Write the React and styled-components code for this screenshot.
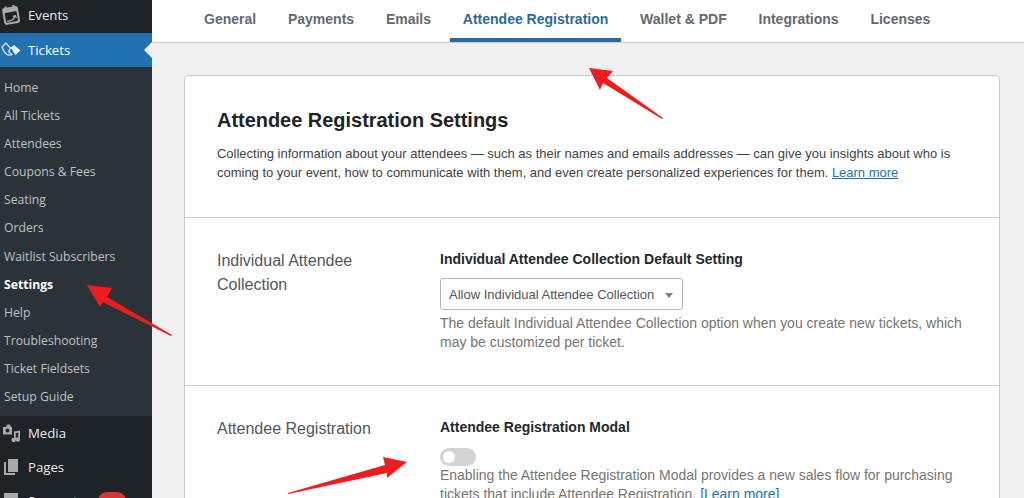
import React from 'react';
import styled, { createGlobalStyle } from 'styled-components';

const GlobalStyle = createGlobalStyle`
  html, body {
    margin: 0;
    padding: 0;
    height: 498px;
    overflow: hidden;
    background: #f0f0f1;
  }
  * { box-sizing: border-box; }
`;

const Page = styled.div`
  position: relative;
  display: flex;
  width: 1024px;
  height: 498px;
  overflow: hidden;
  font-family: "Liberation Sans", Arial, sans-serif;
`;

// Sidebar
const Sidebar = styled.nav`
  flex: 0 0 152px;
  display: flex;
  flex-direction: column;
  height: 640px;
  background: #1d2327;
  font-family: "Open Sans", "Noto Sans", sans-serif;
`;

const MenuItem = styled.div`
  position: relative;
  display: flex;
  align-items: center;
  flex: 0 0 34px;
  gap: 7px;
  padding-left: 1px;
  font-size: 13.2px;
  color: ${(p) => (p.$active ? '#fff' : '#e8eaeb')};
  background: ${(p) => (p.$active ? '#2271b1' : 'transparent')};
`;

const FirstItem = styled(MenuItem)`
  flex-basis: 33px;
  padding-bottom: 3px;
`;

const MenuIcon = styled.svg`
  flex: 0 0 20px;
  width: 20px;
  height: 20px;
`;

const Notch = styled.span`
  position: absolute;
  right: 0;
  top: 50%;
  margin-top: -8px;
  border: 8px solid transparent;
  border-right-color: #f0f0f1;
  border-left-width: 0;
`;

const Badge = styled.span`
  width: 28px;
  height: 18px;
  margin-left: 14px;
  border-radius: 9px;
  background: #d63638;
`;

const SubMenu = styled.div`
  flex: 0 0 349px;
  display: flex;
  flex-direction: column;
  padding: 7px 0 0 4px;
  background: #2c3338;
`;

const SubItem = styled.div`
  height: 28.1px;
  line-height: 28px;
  font-size: 12.2px;
  white-space: nowrap;
  color: ${(p) => (p.$current ? '#fff' : '#bcc1c5')};
  font-weight: ${(p) => (p.$current ? 700 : 400)};
`;

// Main area
const Main = styled.main`
  flex: 1;
  display: flex;
  flex-direction: column;
  min-width: 0;
`;

const TabBar = styled.div`
  flex: 0 0 43px;
  display: flex;
  gap: 6.8px;
  padding-left: 39.5px;
  background: #fff;
  border-bottom: 1px solid #c9cacc;
`;

const Tab = styled.div`
  height: 42px;
  padding: 0 12.5px;
  line-height: 38px;
  font-size: 14px;
  font-weight: 700;
  white-space: nowrap;
  color: ${(p) => (p.$active ? '#2c6a9c' : '#646970')};
  border-bottom: 4px solid ${(p) => (p.$active ? '#2c6a9c' : 'transparent')};
`;

const Card = styled.section`
  width: 816px;
  margin: 32px 0 0 32px;
  background: #fff;
  border: 1px solid #c9cacc;
  border-radius: 4px;
`;

const Intro = styled.div`
  height: 142px;
  padding: 31px 32px 0;
  border-bottom: 1px solid #c9cacc;
`;

const Title = styled.h1`
  margin: 0 0 11px;
  font-size: 19.95px;
  line-height: 26px;
  font-weight: 700;
  color: #1d2327;
`;

const IntroText = styled.p`
  margin: 0;
  font-size: 12.97px;
  line-height: 19px;
  color: #3c434a;
`;

const Link = styled.span`
  color: #2271b1;
  text-decoration: underline;
`;

const Row = styled.div`
  display: flex;
  height: ${(p) => p.$height}px;
  padding: 31px 32px 0;
  border-bottom: ${(p) => (p.$last ? 'none' : '1px solid #c9cacc')};
`;

const RowLabel = styled.div`
  flex: 0 0 223px;
  padding-right: 50px;
  font-size: 16px;
  line-height: 24px;
  color: #50575e;
`;

const RowBody = styled.div`
  flex: 1;
  min-width: 0;
`;

const FieldTitle = styled.div`
  font-size: 14px;
  line-height: 20px;
  font-weight: 700;
  color: #23282d;
`;

const Select = styled.div`
  display: flex;
  align-items: center;
  justify-content: space-between;
  width: 243px;
  height: 32px;
  margin: 9px 0 4px;
  padding: 0 9px 0 8px;
  border: 1px solid #b4b6b8;
  border-radius: 3px;
  font-size: 13px;
  color: #50575e;
`;

const Caret = styled.span`
  margin-top: 2px;
  border: 4px solid transparent;
  border-top: 5px solid #7b8085;
  border-bottom-width: 0;
`;

const Help = styled.p`
  margin: 0;
  width: 530px;
  font-size: 13.97px;
  line-height: 19px;
  color: #757575;
`;

const Toggle = styled.div`
  display: flex;
  align-items: center;
  width: 36px;
  height: 18px;
  margin: 11px 0 0;
  padding-left: 3px;
  border-radius: 9px;
  background: #d4d4d4;
`;

const Knob = styled.span`
  width: 12px;
  height: 12px;
  border-radius: 50%;
  background: #fff;
`;

const Arrow = styled.svg`
  position: absolute;
  left: 0;
  top: 0;
  pointer-events: none;
`;

const subItems = [
  'Home', 'All Tickets', 'Attendees', 'Coupons & Fees', 'Seating', 'Orders',
  'Waitlist Subscribers', 'Settings', 'Help', 'Troubleshooting', 'Ticket Fieldsets', 'Setup Guide',
];

const tabs = ['General', 'Payments', 'Emails', 'Attendee Registration', 'Wallet & PDF', 'Integrations', 'Licenses'];

const EventsIcon = () => (
  <MenuIcon viewBox="0 0 20 20">
    <g transform="rotate(-10 10 10)">
      <rect x="2" y="2" width="16" height="17" rx="2.500" fill="#a7aaad" />
      <rect x="4" y="7" width="12" height="10" rx="1" fill="#1d2327" />
      <path d="M6 0.500v4M14 0.500v4" stroke="#a7aaad" strokeWidth="2" />
      <path d="M5 15.500c3 .5 7-.5 9-4l-2.500.2M14 11.500l.8 2.400" stroke="#a7aaad" strokeWidth="1.300" fill="none" />
    </g>
  </MenuIcon>
);

const TicketsIcon = () => (
  <MenuIcon viewBox="0 0 20 20">
    <path d="M1 7l4-4 4.500 5-2 3.500 3.500 3c-4 2-7 0-10-7.500z" fill="none" stroke="#e4f1fb" strokeWidth="1.200" />
    <path d="M9.500 7.500l3.500-2.500 6.500 5.500-5 4.500z" fill="#e4f1fb" />
  </MenuIcon>
);

const MediaIcon = () => (
  <MenuIcon viewBox="0 0 20 20">
    <path d="M2 4h3l1.200-2.500h2.600L10 4h1v7.500H2z" fill="#a7aaad" />
    <circle cx="6.500" cy="7.500" r="1.900" fill="#1d2327" />
    <path d="M13 8.500l6-1v9a2.200 2.200 0 1 1-1.800-2.100v-4.700l-2.400.4v6.900a2.200 2.200 0 1 1-1.800-2.100z" fill="#a7aaad" />
  </MenuIcon>
);

const PagesIcon = () => (
  <MenuIcon viewBox="0 0 20 20">
    <path d="M7 2h10v13H7z" fill="#a7aaad" />
    <path d="M3 5h2v11h9v2H3z" fill="#a7aaad" />
  </MenuIcon>
);

const SupportIcon = () => (
  <MenuIcon viewBox="0 0 20 20">
    <path d="M3 2h14v13H3z" fill="#a7aaad" />
  </MenuIcon>
);

// Red annotation arrows, drawn from tail to head over the page
const Annotations = () => (
  <Arrow width="1024" height="498" viewBox="0 0 1024 498">
    <defs>
      <filter id="soft"><feGaussianBlur stdDeviation="0.500" /></filter>
    </defs>
    <g fill="#ee1c1c" filter="url(#soft)">
      <path d="M589 68L613 71L607 78L663 118L662 119L603 83L600 90Z" />
      <path d="M87 285L112 288L107 297L172 335L171 336L103 302L100 307Z" />
      <path d="M407 462L383 457L385 465L288 493L288 494L387 473L387 478Z" />
    </g>
  </Arrow>
);

export default function App() {
  return (
    <Page>
      <GlobalStyle />
      <Sidebar>
        <FirstItem><EventsIcon />Events</FirstItem>
        <MenuItem $active><TicketsIcon />Tickets<Notch /></MenuItem>
        <SubMenu>
          {subItems.map((item) => (
            <SubItem key={item} $current={item === 'Settings'}>{item}</SubItem>
          ))}
        </SubMenu>
        <MenuItem><MediaIcon />Media</MenuItem>
        <MenuItem><PagesIcon />Pages</MenuItem>
        <MenuItem><SupportIcon />Support<Badge /></MenuItem>
      </Sidebar>
      <Main>
        <TabBar>
          {tabs.map((tab) => (
            <Tab key={tab} $active={tab === 'Attendee Registration'}>{tab}</Tab>
          ))}
        </TabBar>
        <Card>
          <Intro>
            <Title>Attendee Registration Settings</Title>
            <IntroText>
              Collecting information about your attendees — such as their names and emails addresses — can give you insights about who is
              coming to your event, how to communicate with them, and even create personalized experiences for them. <Link>Learn more</Link>
            </IntroText>
          </Intro>
          <Row $height={168}>
            <RowLabel>Individual Attendee Collection</RowLabel>
            <RowBody>
              <FieldTitle>Individual Attendee Collection Default Setting</FieldTitle>
              <Select>Allow Individual Attendee Collection<Caret /></Select>
              <Help>The default Individual Attendee Collection option when you create new tickets, which may be customized per ticket.</Help>
            </RowBody>
          </Row>
          <Row $height={160} $last>
            <RowLabel>Attendee Registration</RowLabel>
            <RowBody>
              <FieldTitle>Attendee Registration Modal</FieldTitle>
              <Toggle><Knob /></Toggle>
              <Help>Enabling the Attendee Registration Modal provides a new sales flow for purchasing tickets that include Attendee Registration. <Link>[Learn more]</Link></Help>
            </RowBody>
          </Row>
        </Card>
      </Main>
      <Annotations />
    </Page>
  );
}
